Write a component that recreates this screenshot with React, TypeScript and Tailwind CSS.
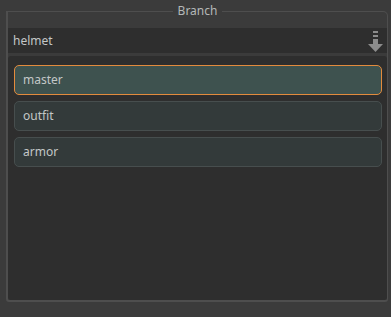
const branches = ['master', 'outfit', 'armor'];

function ArrowIcon() {
  return (
    <svg width="16" height="22" viewBox="0 0 16 22" className="shrink-0">
      <rect x="5" y="1" width="5" height="2" fill="#8c8c8c" />
      <rect x="5" y="5" width="5" height="2" fill="#8c8c8c" />
      <rect x="5" y="9" width="5" height="6" fill="#8c8c8c" />
      <polygon points="0,14 15,14 7.5,22" fill="#8c8c8c" />
    </svg>
  );
}

export default function App() {
  const selected = 'master';
  return (
    <div
      className="w-[391px] h-[317px] bg-[#3b3b3b] pl-[6px] pr-[3px] pt-[3px] text-[12px] text-[#c3c7c7]"
      style={{ fontFamily: '"Noto Sans", "DejaVu Sans", sans-serif' }}
    >
      <fieldset className="h-[299px] border border-[#4e4e4e] border-l-2 border-b-2 rounded-tr-[5px] rounded-br-[3px] rounded-bl-[3px]">
        <legend className="mx-auto px-[5px] leading-[16px] text-[#b4b8b8]">Branch</legend>
        <div className="flex flex-col pt-[9px]">
          <div className="h-[25px] bg-[#2e2e2e] flex items-center justify-between pl-[5px] pr-[3px]">
            <span>helmet</span>
            <ArrowIcon />
          </div>
          <div className="mt-[3px] h-[244px] bg-[#2e2e2e] rounded-[3px] pl-[6px] pr-[5px] pt-[9px] flex flex-col gap-[6px]">
            {branches.map(b => (
              <div
                key={b}
                className={`h-[30px] rounded-[5px] border flex items-center pl-[8px] ${
                  b === selected ? 'bg-[#3e524f] border-[#e38b3d]' : 'bg-[#333a3a] border-[#474e4e]'
                }`}
              >
                {b}
              </div>
            ))}
          </div>
        </div>
      </fieldset>
    </div>
  );
}
